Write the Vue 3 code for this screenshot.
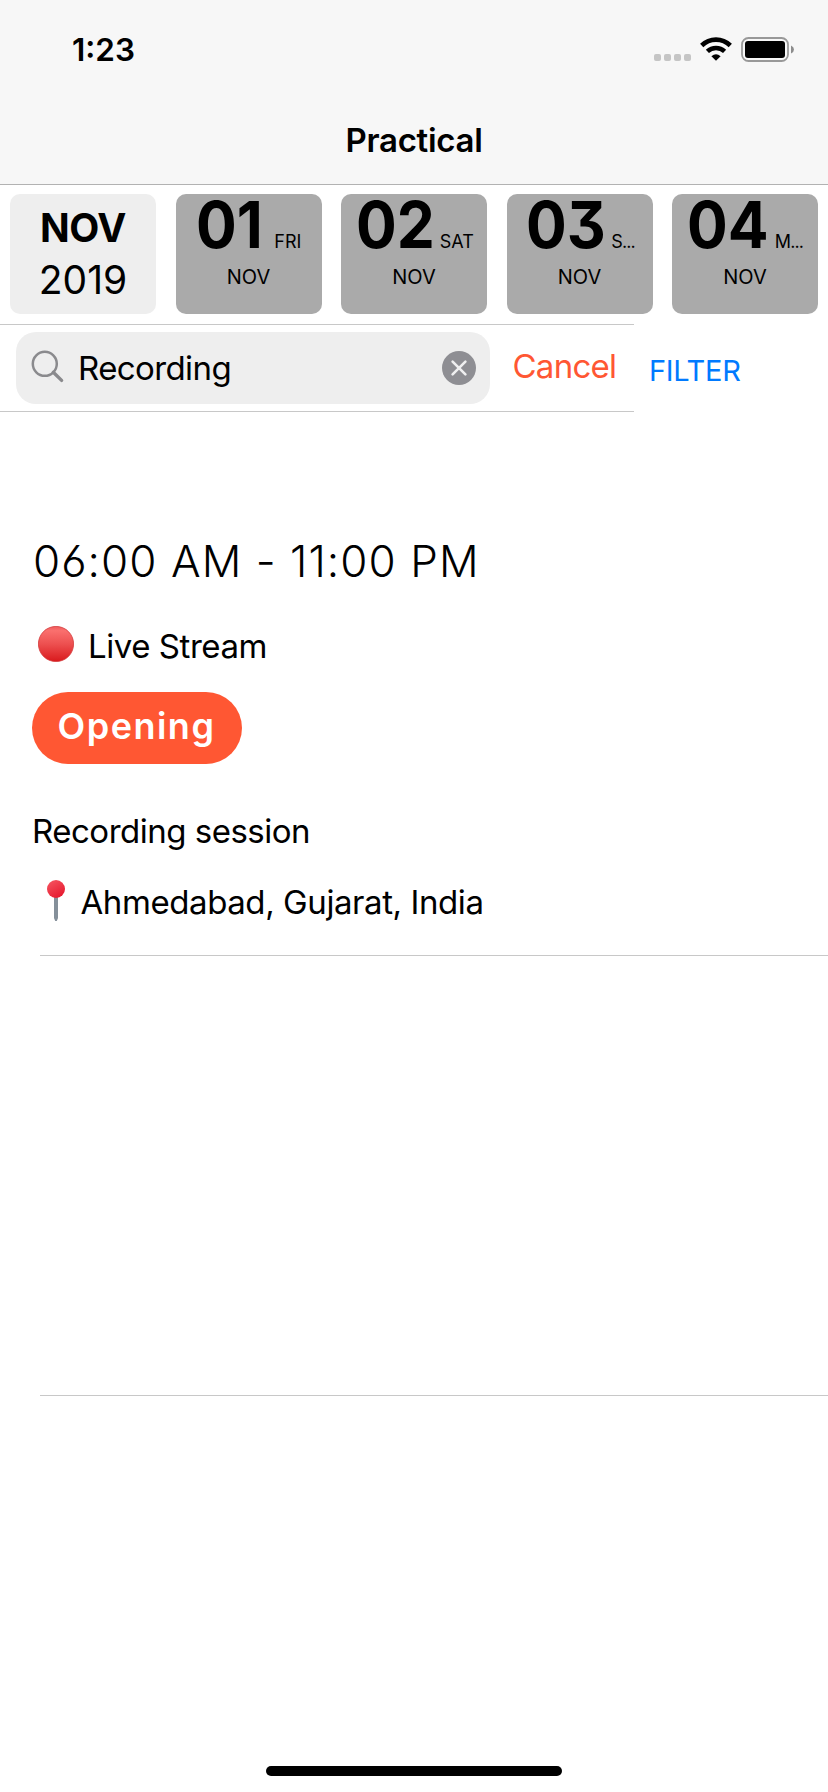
<script setup>
const days = [
  { num: '01', day: 'FRI', pad: 'd1' },
  { num: '02', day: 'SAT', pad: 'd2' },
  { num: '03', day: 'S...', pad: 'd3' },
  { num: '04', day: 'M...', pad: 'd4' },
]
</script>

<template>
  <div class="phone">
    <header class="header">
      <div class="status">
        <span class="clock">1:23</span>
        <div class="indicators">
          <div class="signal"><i v-for="n in 4" :key="n"></i></div>
          <svg class="wifi" width="32" height="24" viewBox="0 0 32 24">
            <path d="M1.7 8.5C9.7 .6 22.3 .6 30.3 8.5" fill="none" stroke="#000" stroke-width="4.6" />
            <path d="M7.4 14.4C12.2 9.8 19.8 9.8 24.6 14.4" fill="none" stroke="#000" stroke-width="4.5" />
            <path d="M11.4 19.2Q16 15.4 20.6 19.2L16 23.8Z" />
          </svg>
          <svg class="battery" width="54" height="26" viewBox="0 0 54 26">
            <rect x="1" y="1" width="46" height="23" rx="6.5" fill="none" stroke="#999" stroke-width="1.8" />
            <rect x="4" y="4" width="40" height="17" rx="3" />
            <path d="M50 8.5Q53 9.8 53 12.5T50 16.5Z" fill="#8c8c8c" />
          </svg>
        </div>
      </div>
      <h1 class="title"><span>Practical</span></h1>
    </header>

    <section class="dates">
      <div class="card month">
        <b>NOV</b>
        <span>2019</span>
      </div>
      <div v-for="d in days" :key="d.num" class="card day" :class="d.pad">
        <div class="top"><b>{{ d.num }}</b><small>{{ d.day }}</small></div>
        <div class="mon">NOV</div>
      </div>
    </section>

    <section class="search-row">
      <div class="searchbar">
        <div class="field">
          <svg class="glass" width="34" height="34" viewBox="0 0 34 34">
            <circle cx="13.8" cy="13.8" r="12" fill="none" stroke="#8a8a8d" stroke-width="2.5" />
            <path d="M22.3 22.3L30.6 30.4" stroke="#8a8a8d" stroke-width="3.4" stroke-linecap="round" />
          </svg>
          <span class="query">Recording</span>
          <svg class="clear" width="34" height="34" viewBox="0 0 34 34">
            <circle cx="17" cy="17" r="17" fill="#8e8e93" />
            <path d="M10.6 10.6L23.4 23.4M23.4 10.6L10.6 23.4" stroke="#efeff0" stroke-width="2.6" stroke-linecap="round" />
          </svg>
        </div>
        <span class="cancel">Cancel</span>
      </div>
      <span class="filter">FILTER</span>
    </section>

    <main class="list">
      <article class="event">
        <div class="time">06:00 AM - 11:00 PM</div>
        <div class="line live">
          <svg class="dot" width="36" height="36" viewBox="0 0 36 36">
            <defs>
              <linearGradient id="red" x1="0" y1="0" x2="0" y2="1">
                <stop offset="0" stop-color="#ef5a5a" />
                <stop offset=".12" stop-color="#fa706e" />
                <stop offset=".5" stop-color="#ed5050" />
                <stop offset="1" stop-color="#d9191c" />
              </linearGradient>
            </defs>
            <circle cx="18" cy="18" r="17.6" fill="url(#red)" stroke="#d33a3b" stroke-width=".8" />
          </svg>
          <span>Live Stream</span>
        </div>
        <div class="pill"><span>Opening</span></div>
        <div class="line session">Recording session</div>
        <div class="line place">
          <svg class="pin" width="18" height="42" viewBox="0 0 18 42">
            <defs>
              <linearGradient id="head" x1=".2" y1="0" x2=".8" y2="1">
                <stop offset="0" stop-color="#f5525f" />
                <stop offset="1" stop-color="#e5162c" />
              </linearGradient>
            </defs>
            <path d="M7 16H11V38L9.8 41H8.2L7 38Z" fill="#85909a" />
            <circle cx="9" cy="9" r="9" fill="url(#head)" />
          </svg>
          <span>Ahmedabad, Gujarat, India</span>
        </div>
      </article>
      <div class="event empty"></div>
    </main>

    <footer class="home"><i></i></footer>
  </div>
</template>

<style>
body {
  background: #fff;
}
</style>

<style scoped>
.phone {
  width: 828px;
  height: 1792px;
  display: flex;
  flex-direction: column;
  background: #fff;
  color: #000;
  font-family: Inter, "Liberation Sans", sans-serif;
  overflow: hidden;
  white-space: nowrap;
}
svg {
  display: block;
  flex: none;
}
.header {
  box-sizing: border-box;
  height: 185px;
  flex: none;
  background: #f7f7f7;
  border-bottom: 1px solid #b2b2b2;
}
.status {
  display: flex;
  justify-content: space-between;
  height: 100px;
  padding: 0 33px 0 72px;
}
.clock {
  font-size: 31.5px;
  font-weight: 600;
  line-height: 99px;
}
.indicators {
  display: flex;
  padding-top: 37px;
}
.signal {
  display: flex;
  gap: 3px;
  padding-top: 17px;
}
.signal i {
  width: 7px;
  height: 7px;
  border-radius: 2px;
  background: #c5c5c5;
}
.wifi {
  margin-left: 9px;
}
.battery {
  margin-left: 9px;
}
.title {
  margin: 0;
  font-size: 33px;
  font-weight: 600;
  letter-spacing: -0.3px;
  line-height: 80px;
  text-align: center;
}
.dates {
  display: flex;
  justify-content: space-between;
  padding: 9px 10px 10px;
  flex: none;
}
.card {
  width: 146px;
  height: 120px;
  border-radius: 10px;
}
.month {
  display: flex;
  flex-direction: column;
  align-items: center;
  background: #eee;
}
.month b {
  font-size: 39px;
  letter-spacing: -0.4px;
  line-height: 52px;
  margin-top: 8px;
}
.month span {
  font-size: 39px;
  line-height: 52px;
}
.day {
  background: #aaa;
}
.top {
  display: flex;
  height: 62px;
  font-feature-settings: "cv09";
}
.top b {
  font-size: 65px;
  line-height: 62px;
  transform: scaleX(0.93);
  transform-origin: 0 50%;
}
.top small {
  font-size: 18px;
  line-height: 96px;
}
.d1 .top { padding-left: 20px; }
.d2 .top { padding-left: 15px; }
.d3 .top { padding-left: 19px; }
.d4 .top { padding-left: 15px; }
.d1 small { margin-left: 7px; }
.d2 small { margin-left: -1px; }
.d3 small,
.d4 small { letter-spacing: -0.9px; }
.mon {
  font-size: 20px;
  line-height: 42px;
  text-align: center;
}
.search-row {
  display: flex;
  height: 88px;
  flex: none;
}
.searchbar {
  box-sizing: border-box;
  width: 634px;
  border-top: 1px solid #c8c8c8;
  border-bottom: 1px solid #c8c8c8;
  padding: 7px 0 0 16px;
  display: flex;
}
.field {
  width: 474px;
  height: 72px;
  border-radius: 20px;
  background: #eee;
  display: flex;
}
.glass {
  margin: 18px 0 0 15px;
}
.query {
  flex: 1;
  margin-left: 13px;
  font-size: 33px;
  letter-spacing: -0.6px;
  line-height: 73px;
}
.clear {
  margin: 19px 14px 0 0;
}
.cancel {
  margin-left: 22.5px;
  font-size: 33px;
  letter-spacing: -0.75px;
  line-height: 68px;
  color: #ff5733;
}
.filter {
  margin-left: 15px;
  font-size: 29px;
  letter-spacing: -0.3px;
  line-height: 93px;
  color: #007aff;
}
.list {
  flex: 1;
}
.event {
  box-sizing: border-box;
  height: 544px;
  padding: 119px 0 0 32px;
  background: linear-gradient(#c8c8c8, #c8c8c8) 40px 100% / 788px 1px no-repeat;
}
.empty {
  height: 440px;
}
.time {
  margin-left: 1px;
  font-size: 44px;
  font-weight: 300;
  letter-spacing: 1.05px;
  line-height: 60px;
  font-feature-settings: "cv03";
}
.line {
  display: flex;
  font-size: 33px;
  line-height: 40px;
}
.live {
  margin-top: 35px;
  letter-spacing: -0.45px;
}
.dot {
  margin: 0 14px 0 6px;
}
.pill {
  box-sizing: border-box;
  width: 210px;
  height: 72px;
  margin-top: 26px;
  padding-left: 25.5px;
  border-radius: 36px;
  background: #ff5733;
  color: #fff;
  font-size: 36px;
  font-weight: 600;
  letter-spacing: 1.5px;
  line-height: 69px;
}
.session {
  margin-top: 47px;
  letter-spacing: -0.5px;
}
.place {
  margin-top: 31px;
  letter-spacing: -0.42px;
}
.pin {
  margin: -2px 15.5px 0 15px;
}
.home {
  flex: none;
  height: 26px;
  display: flex;
  justify-content: center;
}
.home i {
  width: 296px;
  height: 10px;
  border-radius: 5px;
  background: #000;
}
</style>
